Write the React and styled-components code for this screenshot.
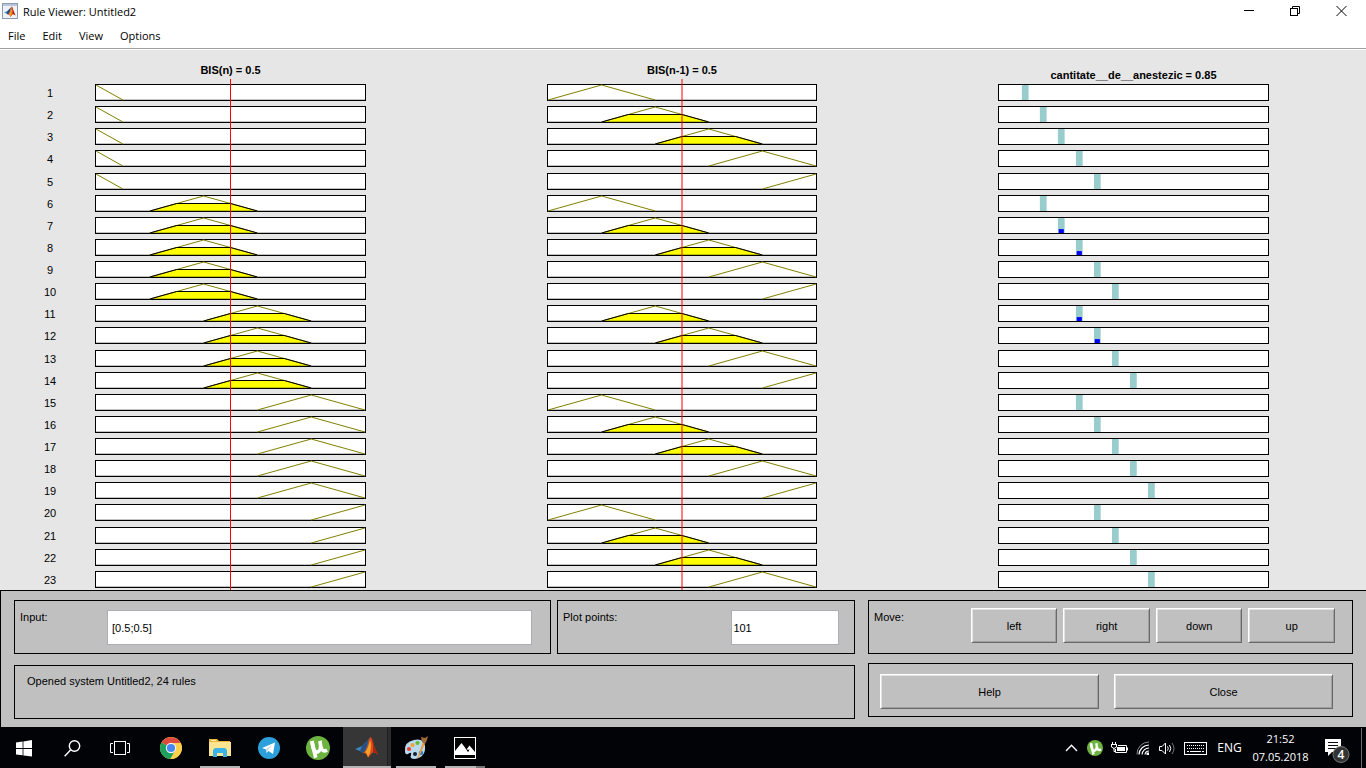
import React from "react";
import styled, { createGlobalStyle } from "styled-components";

const sans = `"Liberation Sans", Arial, sans-serif`;
const ui = `"Open Sans", "Noto Sans", sans-serif`;

const GlobalStyle = createGlobalStyle`
  * { box-sizing: border-box; }
  body { margin: 0; background: #e6e6e6; font-family: ${sans}; font-size: 11px; color: #000; }
  button, input { font: inherit; color: inherit; border-radius: 0; }
`;

const Desktop = styled.div`
  display: flex;
  flex-direction: column;
  min-height: 100vh;
`;

/* ---------- window chrome ---------- */

const TitleBar = styled.header`
  display: flex;
  align-items: center;
  height: 22px;
  padding: 0 2px 0 2px;
  background: #fff;
  font-family: ${ui};
`;

const WindowTitle = styled.h1`
  flex: 1;
  margin: 0 0 0 4px;
  padding-top: 2px;
  font-size: 11px;
  line-height: 18px;
  font-weight: 400;
`;

const CaptionButton = styled.button`
  display: flex;
  justify-content: center;
  align-items: center;
  width: 46px;
  height: 20px;
  padding: 0;
  border: 0;
  background: none;
`;

const MenuBar = styled.nav`
  display: flex;
  gap: 17px;
  height: 27px;
  padding: 0 8px;
  background: #fff;
  border-bottom: 1px solid #a0a0a0;
  font-family: ${ui};
`;

const MenuButton = styled.button`
  height: 26px;
  padding: 1px 0 0;
  border: 0;
  background: none;
  font-size: 11px;
  line-height: 25px;
`;

/* ---------- rule plots ---------- */

const PlotArea = styled.main`
  flex: 1;
  display: grid;
  grid-template-columns: 95fr 271fr 181fr 270fr 181fr 271fr 97fr;
  min-height: 440px;
  padding-bottom: 2px;
  border-top: 1px solid #fff;
  background: #e6e6e6;
`;

const PlotColumn = styled.section`
  grid-column: ${(p) => p.$track};
  display: flex;
  flex-direction: column;
`;

const PlotTitle = styled.h2`
  display: flex;
  justify-content: center;
  align-items: flex-end;
  height: 34px;
  margin: 0;
  padding-bottom: ${(p) => (p.$low ? 2 : 7)}px;
  font-size: 11px;
  line-height: 13px;
  white-space: nowrap;
`;

const Rows = styled.div`
  position: relative;
  flex: 1;
  display: flex;
  flex-direction: column;
  justify-content: space-between;
`;

const RuleNumber = styled.div`
  height: 17px;
  padding-left: 5px;
  line-height: 18px;
  text-align: center;
`;

const Plot = styled.div`
  height: 17px;
  border: 1px solid #000;
  background: #fff;
`;

const PlotSvg = styled.svg`
  display: block;
  width: 100%;
  height: 100%;
  overflow: visible;
`;

const InputLine = styled.div`
  position: absolute;
  top: -5px;
  bottom: -2px;
  left: 50%;
  width: ${(p) => (p.$soft ? 2 : 1)}px;
  margin-left: -1px;
  background: ${(p) => (p.$soft ? "rgba(255,0,0,0.5)" : "#f00")};
`;

/* ---------- control panel ---------- */

const ControlPanel = styled.section`
  display: grid;
  grid-template-columns: 841fr 485fr;
  gap: 13px;
  height: 137px;
  padding: 9px 13px 0 13px;
  border: 1px solid #000;
  border-width: 1px 0 0 1px;
  background: #c0c0c0;
`;

const Stack = styled.div`
  display: flex;
  flex-direction: column;
  gap: ${(p) => p.$gap}px;
`;

const FrameRow = styled.div`
  display: grid;
  grid-template-columns: 537fr 298fr;
  gap: 6px;
`;

const Frame = styled.div`
  display: flex;
  align-items: flex-start;
  justify-content: space-between;
  gap: ${(p) => p.$gap || 0}px;
  height: 54px;
  padding: ${(p) => p.$pad};
  border: 1px solid #000;
`;

const FieldLabel = styled.label`
  padding-top: 1px;
  line-height: 13px;
`;

const GroupLabel = styled.span`
  padding-top: 3px;
  line-height: 13px;
`;

const TextField = styled.input`
  width: ${(p) => p.$width};
  height: 35px;
  padding: 0 0 0 ${(p) => p.$indent}px;
  border: 1px solid #abadb3;
  background: #fff;
  outline: none;
`;

const StatusText = styled.output`
  line-height: 13px;
`;

const MoveGroup = styled.div`
  display: grid;
  grid-template-columns: repeat(4, 1fr);
  gap: 6px;
  width: 79%;
`;

const PushButton = styled.button`
  flex: 1;
  height: 35px;
  padding: 0;
  border: 1px solid;
  border-color: #fff #696969 #696969 #fff;
  background: #c0c0c0;
  box-shadow: inset 1px 1px 0 #e3e3e3, inset -1px -1px 0 #a0a0a0;
`;

/* ---------- taskbar ---------- */

const Taskbar = styled.footer`
  display: flex;
  justify-content: space-between;
  height: 41px;
  background: #020307;
  color: #fff;
  font-family: ${ui};
`;

const TaskGroup = styled.div`
  display: flex;
`;

const AppGroup = styled(TaskGroup)`
  gap: 1px;
  margin-left: 3px;
`;

const TaskButton = styled.button`
  display: flex;
  justify-content: center;
  align-items: center;
  width: 48px;
  height: 41px;
  padding: 1px 0 0;
  border: 0;
  background: ${(p) =>
    p.$active
      ? "linear-gradient(to right, #363636 44px, #202020 44px, #202020 45px, #2c2c2c 45px)"
      : "none"};
  position: relative;

  &::after {
    content: "";
    display: ${(p) => (p.$running || p.$active ? "block" : "none")};
    position: absolute;
    bottom: 0;
    left: ${(p) => (p.$active ? 0 : 4)}px;
    right: ${(p) => (p.$active ? 0 : 4)}px;
    height: 2px;
    background: ${(p) =>
      p.$stacked
        ? "linear-gradient(to right, #b4b4b4 31px, #777 31px)"
        : "#b4b4b4"};
  }
`;

const Tray = styled.div`
  display: flex;
  align-items: center;
  padding-right: 4px;
`;

const TrayButton = styled.button`
  display: flex;
  justify-content: center;
  align-items: center;
  width: 24px;
  height: 41px;
  padding: 1px 0 0;
  border: 0;
  background: none;
`;

const WideTrayButton = styled(TrayButton)`
  width: ${(p) => p.$width}px;
  font-size: 12px;
`;

const LanguageButton = styled(WideTrayButton)`
  padding: 0 0 0 3px;
`;

const Clock = styled.time`
  width: 71px;
  font-size: 11px;
  line-height: 18px;
  text-align: center;
`;

const ShowDesktop = styled.div`
  height: 40px;
  border-left: 1px solid #6a6a6a;
`;

/* ---------- data ---------- */

const BIS_N = {
  A: [[0, 1], [0.1, 0]],
  B: [[0.2, 0], [0.4, 1], [0.6, 0]],
  C: [[0.4, 0], [0.6, 1], [0.8, 0]],
  D: [[0.6, 0], [0.8, 1], [1, 0]],
  E: [[0.8, 0], [1, 1]],
};

const BIS_PREV = {
  a: [[0, 0], [0.2, 1], [0.4, 0]],
  b: [[0.2, 0], [0.4, 1], [0.6, 0]],
  c: [[0.4, 0], [0.6, 1], [0.8, 0]],
  d: [[0.6, 0], [0.8, 1], [1, 0]],
  e: [[0.8, 0], [1, 1]],
};

// Each rule: set of the first input, set of the second input, output step.
const RULES = [
  "Aa0", "Ab1", "Ac2", "Ad3", "Ae4",
  "Ba1", "Bb2", "Bc3", "Bd4", "Be5",
  "Cb3", "Cc4", "Cd5", "Ce6",
  "Da3", "Db4", "Dc5", "Dd6", "De7",
  "Ea4", "Eb5", "Ec6", "Ed7",
];

const fires = (set) => "BCbc".includes(set);

function Membership({ points, active }) {
  const line = points.map(([x, y]) => `${x * 1000},${100 - y * 100}`).join(" ");
  const start = points[0][0] * 1000;
  const clipped = `${start},100 ${start + 100},50 ${start + 300},50 ${start + 400},100`;
  return (
    <Plot>
      <PlotSvg viewBox="0 0 1000 100" preserveAspectRatio="none" aria-hidden="true">
        {active && <polygon points={clipped} fill="#ff0" />}
        <line x1="0" y1="97" x2="1000" y2="97" stroke="#000" strokeOpacity="0.25" vectorEffect="non-scaling-stroke" />
        <polyline points={line} fill="none" stroke="#808000" vectorEffect="non-scaling-stroke" />
        {active && (
          <polyline points={clipped} fill="none" stroke="#000" vectorEffect="non-scaling-stroke" />
        )}
      </PlotSvg>
    </Plot>
  );
}

function Output({ step, active }) {
  const center = 97 + step * 67;
  return (
    <Plot>
      <PlotSvg viewBox="0 0 1000 100" preserveAspectRatio="none" aria-hidden="true">
        <rect x={center - 12} y="0" width="25" height="100" fill="#99cccc" />
        {active && <rect x={center - 9} y="74" width="19" height="26" fill="#00f" />}
      </PlotSvg>
    </Plot>
  );
}

/* ---------- icons ---------- */

function MatlabShape() {
  return (
    <>
      <path d="M0 13 L7 10 L11 6 Q13 5 14 2 L12 12 L8 17 L5 15Z" fill="#3f86bd" />
      <path d="M7 10 L11 6 L14 3 L11 13 L8 17 L5 15Z" fill="#275080" />
      <path d="M8 17 Q11 15 13 8 Q14 1 16 1 Q18 4 19 10 L23 19 Q19 15 17 17 L13 22 Q12 17 8 17Z" fill="#dd4b16" />
      <path d="M16 1 Q18 4 19 10 L23 19 Q20 16 18 16 Q19 9 16 1Z" fill="#a32412" />
      <path d="M15 4 Q17 9 15 17 L13 21 Q12 17 10 16 Q13 13 15 4Z" fill="#f6a02c" />
    </>
  );
}

const MatlabIcon = () => (
  <svg width="24" height="24" viewBox="0 0 24 24"><MatlabShape /></svg>
);

const MatlabWindowIcon = () => (
  <svg width="17" height="17" viewBox="0 0 17 17">
    <rect x="0.5" y="0.5" width="15" height="15" fill="#eef2f7" stroke="#8b9bb0" />
    <path d="M1 2H15" stroke="#b7c6da" strokeWidth="2" />
    <g transform="translate(2 3) scale(0.5)"><MatlabShape /></g>
  </svg>
);

const UtorrentIcon = ({ size }) => (
  <svg width={size} height={size} viewBox="0 0 24 24">
    <circle cx="12" cy="12" r="12" fill="#6cb33f" />
    <path d="M6 5 Q7 17 11.5 16 Q16 14 14 5 Q15 18 21 14" fill="none" stroke="#fff" strokeWidth="3.6" />
    <path d="M4 5.5 L7.6 4.6 L11.5 21 L8 22.5Z" fill="#fff" />
  </svg>
);

const StartIcon = () => (
  <svg width="17" height="17" viewBox="0 0 17 17" fill="#fff">
    <path d="M0 2.6 6.6 1.6V8H0ZM7.4 1.5 16 0V8H7.4ZM0 9H6.6V15.3L0 14.4ZM7.4 9H16V16.6L7.4 15.4Z" />
  </svg>
);

const SearchIcon = () => (
  <svg width="17" height="17" viewBox="0 0 17 17" fill="none" stroke="#fff" strokeWidth="1.4">
    <circle cx="10.5" cy="6" r="5.2" />
    <path d="M6.8 9.8 0.6 16.2" />
  </svg>
);

const TaskViewIcon = () => (
  <svg width="20" height="14" viewBox="0 0 20 14" fill="none" stroke="#fff">
    <rect x="4.5" y="0.5" width="11" height="13" />
    <path d="M3 2.5H0.5V11.5H3M17 2.5H19.5V11.5H17" />
  </svg>
);

const ChromeIcon = () => (
  <svg width="22" height="22" viewBox="0 0 22 22">
    <circle cx="11" cy="11" r="11" fill="#fdd04a" />
    <path d="M11 11 L1.5 5.5 A11 11 0 0 1 20.6 6 H11Z" fill="#de4b3e" />
    <path d="M11 11 L1.5 5.5 A11 11 0 0 0 10.4 22 L15.3 13.5Z" fill="#1ca15e" />
    <path d="M11 6H20.6A11 11 0 0 1 10.4 22L15.3 13.5Z" fill="#fdd04a" />
    <circle cx="11" cy="11" r="5.2" fill="#f4f4f4" />
    <circle cx="11" cy="11" r="4.1" fill="#4688f1" />
  </svg>
);

const ExplorerIcon = () => (
  <svg width="22" height="18" viewBox="0 0 22 18">
    <path d="M0 0H8L10 2H21V5H0Z" fill="#e7b73c" />
    <path d="M2 1H7V2H2Z" fill="#fff2b0" />
    <path d="M0 3H22V17H0Z" fill="#fde491" />
    <path d="M4 18V11L6 9H16L18 11V18H14V14H8V18Z" fill="#3ab3e8" />
  </svg>
);

const TelegramIcon = () => (
  <svg width="22" height="22" viewBox="0 0 22 22">
    <circle cx="11" cy="11" r="11" fill="#2ba0da" />
    <path d="M4 11 17 5.5 15 17 10.5 14 8.5 16 8 12.5Z" fill="#fff" />
    <path d="M8 12.5 15 7.5 9.5 13.3 8.5 16Z" fill="#b5d4e6" />
  </svg>
);

const PaintIcon = () => (
  <svg width="24" height="24" viewBox="0 0 24 24">
    <path d="M1 15 Q0 6 10 4 Q20 2 21 10 Q22 21 11 23 Q5 23 7 19 Q8 15 4 18 Q1 19 1 15Z" fill="#b9d9ee" />
    <circle cx="11" cy="18" r="2" fill="#17202b" />
    <circle cx="5" cy="13" r="2.1" fill="#e24332" />
    <circle cx="8.5" cy="9" r="2.1" fill="#f2a431" />
    <circle cx="13.5" cy="7" r="2.1" fill="#69b92c" />
    <circle cx="17" cy="17" r="2.3" fill="#3b84c6" />
    <path d="M13 23 19 6 21 7 15 21Z" fill="#ee9a32" />
    <path d="M18 6 17 1 21 2 24 0 23 4 21 8Z" fill="#a06a3d" />
  </svg>
);

const PhotosIcon = () => (
  <svg width="22" height="22" viewBox="0 0 22 22">
    <rect x="0.5" y="0.5" width="21" height="21" fill="#000" stroke="#fff" />
    <path d="M1 14 7.5 6 12.5 12.5 15.5 8.5 21 15V18H1Z" fill="#fff" />
    <path d="M12 11 14 14.5 15 12.5" fill="none" stroke="#000" />
  </svg>
);

const ChevronIcon = () => (
  <svg width="13" height="8" viewBox="0 0 13 8" fill="none" stroke="#fff" strokeWidth="1.3">
    <path d="M1 7 6.5 1.2 12 7" />
  </svg>
);

const BatteryIcon = () => (
  <svg width="17" height="13" viewBox="0 0 17 13" fill="none" stroke="#fff">
    <path d="M1.5 0V2M4.5 0V2M0 2.5H6M0.5 3V5L3 6.5 5.5 5V3M3 6V9.5H4" />
    <path d="M7 3.5H15.5V10.5H4.5V7" />
    <rect x="6.5" y="5.5" width="7" height="3" fill="#fff" />
    <path d="M16.5 5.5V8.5" />
  </svg>
);

const WifiIcon = () => (
  <svg width="14" height="14" viewBox="0 0 14 14" fill="none">
    <path d="M1 13.5A12 12 0 0 1 13 1" stroke="#8a8a8a" />
    <path d="M3 13.5A10 10 0 0 1 13 4M6 13.5A7 7 0 0 1 13 7M9 13.5A4 4 0 0 1 13 10" stroke="#fff" strokeWidth="1.2" />
    <rect x="10.5" y="11.5" width="2.5" height="2.5" fill="#fff" />
  </svg>
);

const SoundIcon = () => (
  <svg width="17" height="13" viewBox="0 0 17 13" fill="none" stroke="#fff">
    <path d="M0.5 4.5H3L6.5 1V12L3 8.5H0.5Z" />
    <path d="M8.5 4.5Q10 6.5 8.5 8.5M10.5 3Q13 6.5 10.5 10" />
    <path d="M13 1Q17 6.5 13 12" stroke="#777" />
  </svg>
);

const KeyboardIcon = () => (
  <svg width="23" height="13" viewBox="0 0 23 13" fill="none" stroke="#fff">
    <rect x="0.5" y="0.5" width="22" height="12" />
    <path d="M3 3.5H20M3 6.5H20" strokeDasharray="1 1" />
    <path d="M3 9.5H5M6 9.5H17M18 9.5H20" />
  </svg>
);

const NotificationIcon = () => (
  <svg width="30" height="30" viewBox="0 -6 30 30">
    <path d="M1 0H17V13H8L4 17V13H1Z" fill="#fff" />
    <path d="M4 3.5H14M4 6.5H14M4 9.5H12" stroke="#0a0a0a" />
    <circle cx="17" cy="15.5" r="8" fill="#333" stroke="#777" />
    <text x="17" y="20" fill="#fff" fontSize="12" fontFamily="Open Sans, sans-serif" fontWeight="600" textAnchor="middle">4</text>
  </svg>
);

export default function App() {
  return (
    <Desktop>
      <GlobalStyle />
      <TitleBar>
        <MatlabWindowIcon />
        <WindowTitle>Rule Viewer: Untitled2</WindowTitle>
        <CaptionButton aria-label="Minimize">
          <svg width="11" height="11" stroke="#000"><path d="M0 4.5H10" /></svg>
        </CaptionButton>
        <CaptionButton aria-label="Restore">
          <svg width="11" height="11" fill="none" stroke="#000">
            <rect x="0.5" y="2.5" width="7" height="7" />
            <path d="M2.5 2.5V0.5H9.5V7.5H7.5" />
          </svg>
        </CaptionButton>
        <CaptionButton aria-label="Close window">
          <svg width="11" height="11" stroke="#000"><path d="M0.5 0 10.5 10M10.5 0 0.5 10" /></svg>
        </CaptionButton>
      </TitleBar>
      <MenuBar>
        {["File", "Edit", "View", "Options"].map((m) => <MenuButton key={m}>{m}</MenuButton>)}
      </MenuBar>

      <PlotArea>
        <PlotColumn $track={1}>
          <PlotTitle />
          <Rows>
            {RULES.map((r, i) => <RuleNumber key={r}>{i + 1}</RuleNumber>)}
          </Rows>
        </PlotColumn>
        <PlotColumn $track={2}>
          <PlotTitle>BIS(n) = 0.5</PlotTitle>
          <Rows>
            {RULES.map((r) => <Membership key={r} points={BIS_N[r[0]]} active={fires(r[0])} />)}
            <InputLine />
          </Rows>
        </PlotColumn>
        <PlotColumn $track={4}>
          <PlotTitle>BIS(n-1) = 0.5</PlotTitle>
          <Rows>
            {RULES.map((r) => <Membership key={r} points={BIS_PREV[r[1]]} active={fires(r[1])} />)}
            <InputLine $soft />
          </Rows>
        </PlotColumn>
        <PlotColumn $track={6}>
          <PlotTitle $low>cantitate__de__anestezic = 0.85</PlotTitle>
          <Rows>
            {RULES.map((r) => (
              <Output key={r} step={Number(r[2])} active={fires(r[0]) && fires(r[1])} />
            ))}
          </Rows>
        </PlotColumn>
      </PlotArea>

      <ControlPanel>
        <Stack $gap={11}>
          <FrameRow>
            <Frame $pad="9px 18px 0 5px">
              <FieldLabel htmlFor="input">Input:</FieldLabel>
              <TextField id="input" defaultValue="[0.5;0.5]" $width="83%" $indent={4} />
            </Frame>
            <Frame $pad="9px 15px 0 5px">
              <FieldLabel htmlFor="points">Plot points:</FieldLabel>
              <TextField id="points" defaultValue="101" $width="39%" $indent={1} />
            </Frame>
          </FrameRow>
          <Frame $pad="9px 12px 0 12px">
            <StatusText>Opened system Untitled2, 24 rules</StatusText>
          </Frame>
        </Stack>
        <Stack $gap={9}>
          <Frame $pad="7px 17px 0 5px">
            <GroupLabel id="move">Move:</GroupLabel>
            <MoveGroup role="group" aria-labelledby="move">
              {["left", "right", "down", "up"].map((d) => <PushButton key={d}>{d}</PushButton>)}
            </MoveGroup>
          </Frame>
          <Frame $pad="10px 19px 0 11px" $gap={15}>
            <PushButton>Help</PushButton>
            <PushButton>Close</PushButton>
          </Frame>
        </Stack>
      </ControlPanel>

      <Taskbar>
        <TaskGroup>
          <TaskButton aria-label="Start"><StartIcon /></TaskButton>
          <TaskButton aria-label="Search"><SearchIcon /></TaskButton>
          <TaskButton aria-label="Task view"><TaskViewIcon /></TaskButton>
          <AppGroup>
            <TaskButton aria-label="Chrome"><ChromeIcon /></TaskButton>
            <TaskButton aria-label="File Explorer" $running><ExplorerIcon /></TaskButton>
            <TaskButton aria-label="Telegram"><TelegramIcon /></TaskButton>
            <TaskButton aria-label="uTorrent"><UtorrentIcon size={24} /></TaskButton>
            <TaskButton aria-label="MATLAB" $active><MatlabIcon /></TaskButton>
            <TaskButton aria-label="Paint" $running><PaintIcon /></TaskButton>
            <TaskButton aria-label="Photos" $running $stacked><PhotosIcon /></TaskButton>
          </AppGroup>
        </TaskGroup>
        <Tray>
          <TrayButton aria-label="Show hidden icons"><ChevronIcon /></TrayButton>
          <TrayButton aria-label="uTorrent"><UtorrentIcon size={16} /></TrayButton>
          <TrayButton aria-label="Battery"><BatteryIcon /></TrayButton>
          <TrayButton aria-label="Network"><WifiIcon /></TrayButton>
          <TrayButton aria-label="Volume"><SoundIcon /></TrayButton>
          <WideTrayButton aria-label="Touch keyboard" $width={32}><KeyboardIcon /></WideTrayButton>
          <LanguageButton $width={34}>ENG</LanguageButton>
          <Clock>21:52<br />07.05.2018</Clock>
          <WideTrayButton aria-label="Notifications, 4 new" $width={45}><NotificationIcon /></WideTrayButton>
          <ShowDesktop />
        </Tray>
      </Taskbar>
    </Desktop>
  );
}
